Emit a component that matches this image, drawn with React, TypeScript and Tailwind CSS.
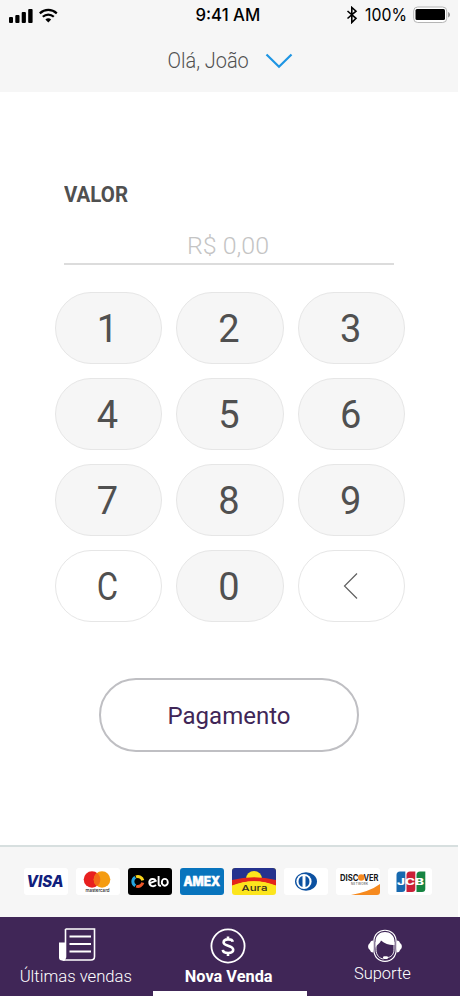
import type { ReactNode } from "react";
import clsx from "clsx";

const keys = ["1", "2", "3", "4", "5", "6", "7", "8", "9", "C", "0", "<"];

function StatusBar() {
  return (
    <div className="flex h-[30px] items-center font-[Inter,sans-serif] text-[17px] leading-none text-black">
      <div className="flex w-[153px] items-center pl-2">
        <svg width="52" height="18" viewBox="0 0 52 18">
          <rect x="1" y="11" width="4" height="6" rx="1" />
          <rect x="7.3" y="9" width="4.2" height="8" rx="1" />
          <rect x="13.7" y="6" width="4.2" height="11" rx="1" />
          <rect x="20.2" y="3" width="4.4" height="14" rx="1" />
          <g fill="none" stroke="#000" strokeWidth="2.2">
            <path d="M31.8 7.4C36.8 2.8 43.8 2.8 48.8 7.4" />
            <path d="M34.8 10.8C38 7.8 42.6 7.8 45.8 10.8" />
          </g>
          <path d="M37.4 13.5C39.2 11.9 41.4 11.9 43.2 13.5L40.3 16.4Z" />
        </svg>
      </div>
      <div className="flex w-[153px] justify-center">
        <span className="-translate-x-[2px] scale-x-[0.985] font-medium whitespace-nowrap">9:41 AM</span>
      </div>
      <div className="flex w-[152px] items-center justify-end pr-[7px]">
        <svg width="12" height="18" viewBox="0 0 12 18" className="mr-[7px] shrink-0">
          <path
            d="M1.5 5L10 12.4L5.8 16.5V1.5L10 5.2L1.5 12.5"
            fill="none"
            stroke="#000"
            strokeWidth="1.6"
          />
        </svg>
        <span className="w-[42px] origin-left scale-x-[0.93]">100%</span>
        <svg width="38" height="18" viewBox="0 0 38 18" className="ml-1.5 shrink-0">
          <rect x="0.7" y="1" width="33" height="15.5" rx="4" fill="#fff" stroke="#b5b5b5" />
          <rect x="2.5" y="3" width="29.5" height="11" rx="1.5" />
          <path d="M35.2 6V11.5C37.5 10.5 37.5 7 35.2 6Z" fill="#888" />
        </svg>
      </div>
    </div>
  );
}

function Header() {
  return (
    <header className="h-[92px] w-[458px] bg-[#f6f6f6]">
      <StatusBar />
      <button className="mx-auto flex h-[62px] w-[126px] items-center justify-between">
        <span className="w-[82px] origin-left translate-x-[1.5px] -translate-y-px scale-x-[0.905] text-[22px] font-light whitespace-nowrap text-[#505050]">
          Olá, João
        </span>
        <svg width="28" height="16" viewBox="0 0 28 16" className="shrink-0 translate-x-px">
          <path d="M1.5 1.5L14 13.8L26.5 1.5" fill="none" stroke="#1e95e3" strokeWidth="2.2" />
        </svg>
      </button>
    </header>
  );
}

function Keypad() {
  return (
    <div className="mx-auto grid w-[351px] grid-cols-3 gap-x-3.5 gap-y-3.5">
      {keys.map((key) => (
        <button
          key={key}
          className={clsx(
            "flex h-[72px] items-center justify-center rounded-full border border-[#e6e6e6] text-[38px] text-[#505050]",
            key === "C" || key === "<" ? "bg-white" : "bg-[#f6f6f6]",
          )}
        >
          {key === "<" ? (
            <svg width="15" height="28" viewBox="0 0 15 28" className="-translate-x-px">
              <path d="M14 1.5L1.5 14L14 26.5" fill="none" stroke="#606060" strokeWidth="1.2" />
            </svg>
          ) : (
            <span className={clsx("-translate-x-px translate-y-px", key === "C" && "scale-x-[0.86]")}>
              {key}
            </span>
          )}
        </button>
      ))}
    </div>
  );
}

function Card({ className = "bg-white", children }: { className?: string; children: ReactNode }) {
  return (
    <div className={clsx("h-[27px] w-11 overflow-hidden rounded-[3px]", className)}>
      <svg width="44" height="27" viewBox="0 0 44 27" fontFamily="Inter, sans-serif">
        {children}
      </svg>
    </div>
  );
}

function Brands() {
  return (
    <section className="flex h-[72px] w-[458px] gap-2 border-t-2 border-[#d7dfdf] bg-[#f6f6f6] pt-[21px] pl-[24px]">
      <Card>
        <text x="2.5" y="19.3" fontSize="16" fontWeight="800" fontStyle="italic" fill="#10207c" textLength="37" lengthAdjust="spacingAndGlyphs">
          VISA
        </text>
      </Card>
      <Card>
        <circle cx="16" cy="11.5" r="8.3" fill="#e8201f" />
        <circle cx="26" cy="11.5" r="8.3" fill="#f59c11" />
        <path d="M21 4.9A8.3 8.3 0 0 1 21 18.1A8.3 8.3 0 0 1 21 4.9Z" fill="#f36b16" />
        <text x="9.5" y="24.2" fontSize="4.6" fontWeight="500" fill="#222" textLength="24" lengthAdjust="spacingAndGlyphs">
          mastercard
        </text>
      </Card>
      <Card className="bg-black">
        <g fill="none" strokeWidth="3">
          <path d="M7.3 9.2A5 5 0 0 0 7.3 17.8" stroke="#25a5e0" />
          <path d="M8 8.9A5 5 0 0 1 14.8 12.4" stroke="#f9d51c" />
          <path d="M14.8 14.7A5 5 0 0 1 8.2 18.2" stroke="#ee5728" />
        </g>
        <g fill="none" stroke="#fff" strokeWidth="1.9">
          <path d="M20.8 15.6L27.8 12.8C26.5 10.1 22 10.3 21.3 13.8C21 17.8 25 19.5 28 17" />
          <path d="M30.6 8V15.8C30.6 17.5 31.5 18 33 17.6" />
          <ellipse cx="36.8" cy="14.3" rx="3" ry="3.4" />
        </g>
      </Card>
      <Card className="bg-[#0874bd]">
        <text x="3.5" y="18.3" fontSize="13" fontWeight="800" fill="#fff" stroke="#fff" strokeWidth="0.6" textLength="36.500" lengthAdjust="spacingAndGlyphs">
          AMEX
        </text>
      </Card>
      <Card className="bg-[#fce51d]">
        <path d="M0 0H44V14H0Z" fill="#24328e" />
        <circle cx="22" cy="11" r="8" fill="#fce51d" />
        <path d="M0 12Q22 6.500 44 12V18Q22 8.500 0 18Z" fill="#e3251b" />
        <path d="M0 17.500Q22 9 44 17.500V18.500H0Z" fill="#fce51d" />
        <text x="9.5" y="22.8" fontSize="8" fontWeight="500" fill="#353021" textLength="26" lengthAdjust="spacingAndGlyphs">
          Aura
        </text>
      </Card>
      <Card>
        <ellipse cx="22" cy="13.5" rx="11" ry="9.2" fill="#0c51a1" />
        <circle cx="20" cy="13.5" r="7.6" fill="#fff" />
        <path d="M18.5 8A5.800 5.800 0 0 0 18.5 19ZM21.5 8A5.800 5.800 0 0 1 21.5 19Z" fill="#0c51a1" />
      </Card>
      <Card>
        <text x="4" y="12.600" fontSize="8.7" fontWeight="700" fill="#171717" textLength="18.500" lengthAdjust="spacingAndGlyphs">
          DISC
        </text>
        <circle cx="25.2" cy="9.5" r="3.2" fill="#f68a1f" />
        <text x="27.500" y="12.600" fontSize="8.7" fontWeight="700" fill="#171717" textLength="15" lengthAdjust="spacingAndGlyphs">
          VER
        </text>
        <text x="15" y="16.500" fontSize="3" fill="#333" textLength="17" lengthAdjust="spacing">
          NETWORK
        </text>
        <path d="M15 27Q34 23.5 44 16V27Z" fill="#f68a1f" />
      </Card>
      <Card>
        <path d="M12 3.5H17.3V21Q17.3 24 14 24H8.5V7Q8.5 3.5 12 3.5Z" fill="#1769af" />
        <path d="M22 3.5H27.3V21Q27.3 24 24 24H18.5V7Q18.5 3.5 22 3.5Z" fill="#ca1f37" />
        <path d="M32 3.5H37.3V21Q37.3 24 34 24H28.5V7Q28.5 3.5 32 3.5Z" fill="#168442" />
        <text x="9" y="17" fontSize="8.500" fontWeight="800" fill="#fff" textLength="27" lengthAdjust="spacingAndGlyphs">
          JCB
        </text>
      </Card>
    </section>
  );
}

function Nav() {
  return (
    <nav className="grid h-[79px] grid-cols-3 bg-[#402657] text-[17px] leading-5 whitespace-nowrap text-white">
      <a className="flex flex-col items-center pt-[11px]">
        <svg width="38" height="34" viewBox="0 0 38 34" fill="none" stroke="#fff">
          <path d="M7.500 1H36.500V28.500Q36.500 32 33 32H4.500" strokeWidth="1.6" />
          <path d="M7.500 1V28.500Q7.500 31 5 32" strokeWidth="1.600" />
          <path d="M1 14.5H7V32.5H4Q1 32.5 1 29.5Z" fill="#fff" stroke="none" />
          <path d="M11.5 8.5H33M11.5 16H33M11.5 23.5H33" strokeWidth="1.8" />
        </svg>
        <span className="mt-1 -translate-x-[0.5px] scale-x-[0.98] font-light">Últimas vendas</span>
      </a>
      <a className="flex flex-col items-center border-b-[5px] border-white pt-[11px]">
        <svg width="36" height="36" viewBox="0 0 36 36" fill="none" stroke="#fff" className="-translate-x-0.5">
          <circle cx="18" cy="18" r="16.6" strokeWidth="1.8" />
          <path
            d="M22.8 13.8C22 10.500 13.600 10.500 13.600 14.500C13.600 18.500 23.2 17 23.2 21.800C23.2 26 13.200 26 12.8 21.800M18 8.500V11.5M18 24.500V28"
            strokeWidth="2.6"
          />
        </svg>
        <span className="mt-0.5 -translate-x-px scale-x-[0.96] font-bold">Nova Venda</span>
      </a>
      <a className="flex flex-col items-center pt-3">
        <svg width="36" height="34" viewBox="0 0 36 34" fill="none" stroke="#fff" className="translate-x-[1.5px]">
          <path
            d="M7.300 13C7.300 -2.700 29.700 -2.700 29.700 13V20C29.700 28 25 32.300 18.500 32.300C12 32.300 7.300 28 7.300 20Z"
            strokeWidth="1.200"
          />
          <path
            d="M9.500 13V20.500C9.500 26.500 13.500 29.800 17 30M27.500 13V20.500C27.500 25.500 24.500 28.500 20 28.700"
            strokeWidth="0.900"
          />
          <path
            d="M9 19V12.500C9 -0.200 28 -0.200 28 12.500V16C24 16.500 18.500 15 14.500 11.500C13.500 14.500 10.500 15 9 19Z"
            fill="#fff"
            stroke="none"
          />
          <path
            d="M6.700 11.500V23.500C4.500 23.500 4 22.500 3.500 21C1 19.500 1 15.500 3.500 14C4 12.500 4.500 11.500 6.700 11.500ZM30.300 11.500V23.500C32.500 23.500 33 22.500 33.500 21C36 19.500 36 15.500 33.500 14C33 12.500 32.500 11.500 30.300 11.500Z"
            fill="#fff"
            stroke="none"
          />
          <rect x="16.500" y="27.300" width="5" height="2.800" rx="1.300" fill="#fff" stroke="none" />
        </svg>
        <span className="-translate-x-px scale-x-[0.97] font-light">Suporte</span>
      </a>
    </nav>
  );
}

export default function App() {
  return (
    <div className="flex h-[996px] w-[460px] flex-col overflow-hidden bg-white font-[Roboto,sans-serif]">
      <Header />
      <main className="flex-1 pt-[89px]">
        <div className="mx-16 w-[330px] border-b-2 border-[#dcdcdc]">
          <h1 className="h-[45px] origin-left scale-x-[0.93] text-[22px] leading-7 font-bold text-[#505050]">
            VALOR
          </h1>
          <p className="h-[37px] -translate-x-px scale-x-[1.04] pt-1 text-center text-2xl leading-8 font-light text-[#c4c4c4]">
            R$ 0,00
          </p>
        </div>
        <div className="mt-[27px]">
          <Keypad />
        </div>
        <button className="mt-14 ml-[99px] flex h-[74px] w-[260px] items-center justify-center rounded-full border-2 border-[#bfbfc3] text-2xl text-[#402657]">
          <span className="translate-y-px">Pagamento</span>
        </button>
      </main>
      <Brands />
      <Nav />
    </div>
  );
}
